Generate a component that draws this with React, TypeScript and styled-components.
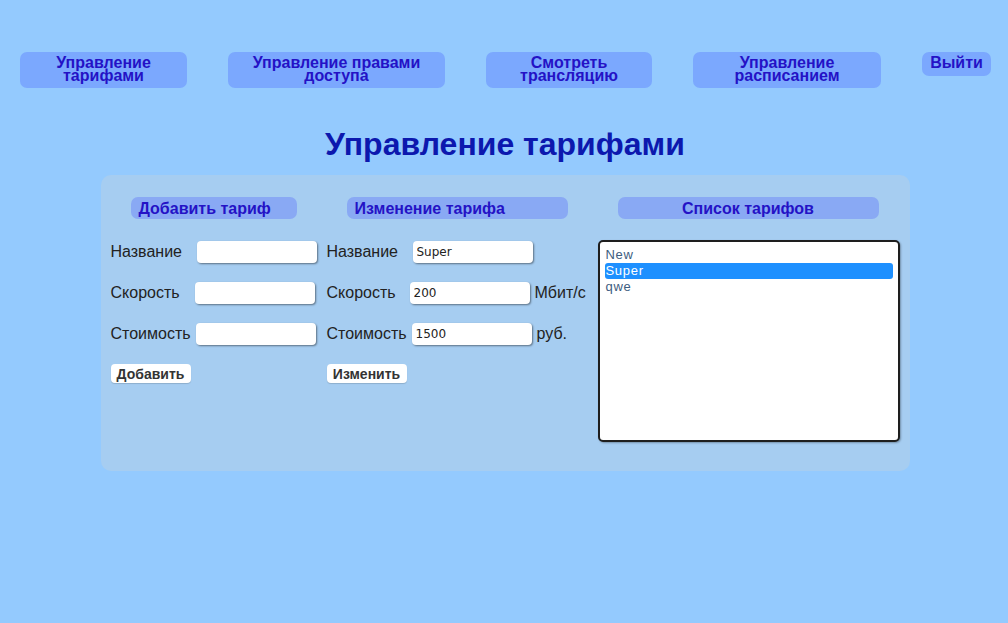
import React from "react";
import styled, { createGlobalStyle } from "styled-components";

const Global = createGlobalStyle`
  html, body { margin: 0; padding: 0; }
  body {
    background: #94cafe;
    font-family: "Liberation Sans", Arial, sans-serif;
    width: 1008px;
    height: 623px;
    overflow: hidden;
  }
`;

const Page = styled.div`
  display: flex;
  flex-direction: column;
  align-items: stretch;
  padding-top: 52px;
`;

const Nav = styled.nav`
  display: flex;
  align-items: flex-start;
  gap: 41px;
  padding-left: 20px;
`;

const NavButton = styled.div<{ $w: number }>`
  width: ${(p) => p.$w}px;
  box-sizing: border-box;
  background: #7ba8fe;
  border-radius: 7px;
  padding: 5px 4px 6px;
  text-align: center;
  font-weight: bold;
  font-size: 16px;
  line-height: 12.5px;
  color: #2412c6;
`;

const Title = styled.h1`
  margin: 38px 0 12px;
  text-align: center;
  font-size: 32px;
  line-height: 37px;
  font-weight: bold;
  color: #0c18ae;
  padding-left: 2px;
`;

const Panel = styled.section`
  align-self: center;
  width: 809px;
  height: 296px;
  box-sizing: border-box;
  margin-left: 2px;
  background: #a6cdf1;
  border-radius: 10px;
  padding: 22px 10px 0 10px;
  display: flex;
`;

const Column = styled.div<{ $w: number }>`
  width: ${(p) => p.$w}px;
  display: flex;
  flex-direction: column;
`;

const SectionHead = styled.div<{ $w: number; $center?: boolean }>`
  width: ${(p) => p.$w}px;
  height: 22px;
  box-sizing: border-box;
  margin-left: 20px;
  background: #89a9f4;
  border-radius: 7px;
  padding-left: ${(p) => (p.$center ? 0 : 8)}px;
  text-align: ${(p) => (p.$center ? "center" : "left")};
  font-weight: bold;
  font-size: 16px;
  line-height: 24px;
  color: #2412c6;
  margin-bottom: 22px;
`;

const Row = styled.div`
  display: flex;
  align-items: center;
  height: 22px;
  margin-bottom: 19px;
`;

const Label = styled.span<{ $w: number }>`
  width: ${(p) => p.$w}px;
  flex: none;
  font-size: 16px;
  color: #222;
`;

const Input = styled.input`
  width: 120px;
  height: 22px;
  box-sizing: border-box;
  border: none;
  border-radius: 4px;
  background: #fff;
  box-shadow: 1px 1px 2px rgba(0, 0, 0, 0.45);
  padding: 0 4px;
  font-family: "DejaVu Sans", sans-serif;
  font-size: 12px;
  color: #222;
  outline: none;
`;

const Unit = styled.span`
  margin-left: 5px;
  font-size: 16px;
  color: #222;
`;

const Button = styled.button`
  align-self: flex-start;
  width: 80px;
  height: 19px;
  padding: 0;
  border: none;
  border-radius: 4px;
  background: #fff;
  font-family: "Liberation Sans", Arial, sans-serif;
  font-weight: bold;
  font-size: 14px;
  color: #333;
  box-shadow: 0 1px 1px rgba(0, 0, 0, 0.15);
`;

const ListBox = styled.div`
  width: 302px;
  height: 202px;
  box-sizing: border-box;
  margin-top: -1px;
  border: 2px solid #1e1e1e;
  border-radius: 5px;
  background: #fff;
  padding: 5px 5px;
  box-shadow: 1px 1px 2px rgba(0, 0, 0, 0.3);
  display: flex;
  flex-direction: column;
`;

const ListItem = styled.div<{ $sel?: boolean }>`
  height: 16px;
  line-height: 16px;
  padding-left: 1px;
  border-radius: 3px;
  font-size: 13px;
  letter-spacing: 0.7px;
  color: ${(p) => (p.$sel ? "#fff" : "#3d5d80")};
  background: ${(p) => (p.$sel ? "#1e90ff" : "transparent")};
`;

export default function App() {
  return (
    <>
      <Global />
      <Page>
        <Nav>
          <NavButton $w={167}>Управление<br />тарифами</NavButton>
          <NavButton $w={217}>Управление правами<br />доступа</NavButton>
          <NavButton $w={166}>Смотреть<br />трансляцию</NavButton>
          <NavButton $w={188}>Управление<br />расписанием</NavButton>
          <NavButton $w={69}>Выйти</NavButton>
        </Nav>
        <Title>Управление тарифами</Title>
        <Panel>
          <Column $w={216}>
            <SectionHead $w={166}>Добавить тариф</SectionHead>
            <Row>
              <Label $w={86}>Название</Label>
              <Input />
            </Row>
            <Row>
              <Label $w={84}>Скорость</Label>
              <Input />
            </Row>
            <Row>
              <Label $w={85}>Стоимость</Label>
              <Input />
            </Row>
            <Button>Добавить</Button>
          </Column>
          <Column $w={271}>
            <SectionHead $w={221}>Изменение тарифа</SectionHead>
            <Row>
              <Label $w={86}>Название</Label>
              <Input defaultValue="Super" />
            </Row>
            <Row>
              <Label $w={83}>Скорость</Label>
              <Input defaultValue="200" />
              <Unit>Мбит/с</Unit>
            </Row>
            <Row>
              <Label $w={85}>Стоимость</Label>
              <Input defaultValue="1500" />
              <Unit>руб.</Unit>
            </Row>
            <Button>Изменить</Button>
          </Column>
          <Column $w={302}>
            <SectionHead $w={261} $center>Список тарифов</SectionHead>
            <ListBox>
              <ListItem>New</ListItem>
              <ListItem $sel>Super</ListItem>
              <ListItem>qwe</ListItem>
            </ListBox>
          </Column>
        </Panel>
      </Page>
    </>
  );
}
